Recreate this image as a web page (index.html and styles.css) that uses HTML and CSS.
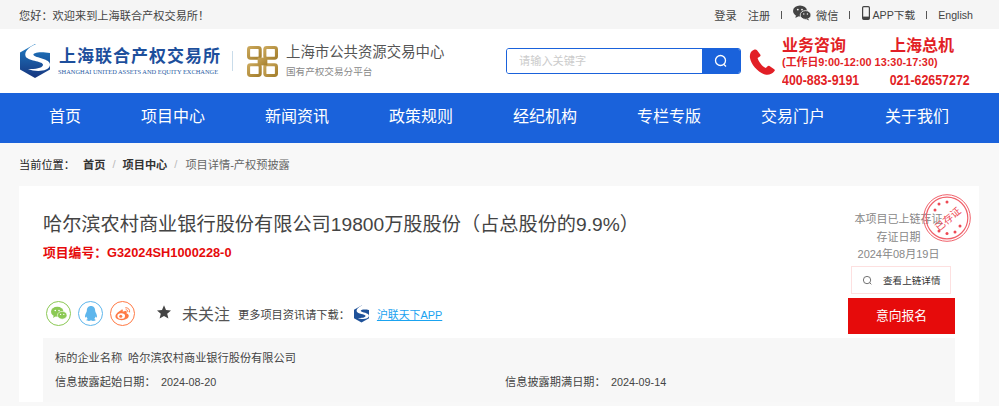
FILE: index.html
```html
<!DOCTYPE html>
<html lang="zh-CN">
<head>
<meta charset="utf-8">
<title>哈尔滨农村商业银行股份有限公司</title>
<link rel="stylesheet" href="styles.css">
</head>
<body>
<div class="topbar">
  <span class="welcome">您好：欢迎来到上海联合产权交易所！</span>
  <div class="toplinks">
    <a class="tl-login">登录</a>
    <a class="tl-reg">注册</a>
    <i class="sep"></i>
    <a class="tl-icon">
      <svg class="ic-wx" viewBox="0 0 18 16"><ellipse cx="7" cy="6" rx="7" ry="5.6" fill="#444"/><path d="M3 10l-.6 3 3-1.8z" fill="#444"/><ellipse cx="12.6" cy="10" rx="5.4" ry="4.4" fill="#444" stroke="#f5f5f5" stroke-width=".8"/><path d="M15 13.5l1.2 2-2.8-1.2z" fill="#444"/><circle cx="4.8" cy="4.6" r=".9" fill="#f5f5f5"/><circle cx="9" cy="4.6" r=".9" fill="#f5f5f5"/><circle cx="10.8" cy="9" r=".7" fill="#f5f5f5"/><circle cx="14.4" cy="9" r=".7" fill="#f5f5f5"/></svg>
      微信</a>
    <i class="sep"></i>
    <a class="tl-icon tl-app">
      <svg class="ic-ph" viewBox="0 0 8 14"><rect x=".6" y=".6" width="6.8" height="12.8" rx="1.2" fill="none" stroke="#444" stroke-width="1.2"/><rect x="1" y="10.6" width="6" height="2.6" fill="#444"/></svg>
      APP下载</a>
    <i class="sep"></i>
    <a class="tl-en">English</a>
  </div>
</div>

<header class="header">
  <div class="brand">
    <svg class="logo-s" viewBox="0 0 32 36">
      <defs><linearGradient id="g1" x1="0" y1="0" x2="0" y2="1"><stop offset="0" stop-color="#1f7cc4"/><stop offset="1" stop-color="#16357e"/></linearGradient></defs>
      <path d="M16 1L31 9.500V26.500L16 35 1 26.500V9.500z" fill="url(#g1)"/>
      <path d="M20 0C11 3 5 8 6.500 13c1.500 5 17 5 17.500 8.500.4 3-6 5-15 4.500 7 3 21 3 22-4 .8-6.500-15-7-16.500-10C13.500 10 20 8 31 10L31 8z" fill="#fff"/>
    </svg>
    <div class="brand-main">
      <div class="brand-cn">上海联合产权交易所</div>
      <div class="brand-en">SHANGHAI UNITED ASSETS AND EQUITY EXCHANGE</div>
    </div>
    <i class="brand-div"></i>
    <svg class="logo-g" viewBox="0 0 32 32">
      <defs><linearGradient id="g2" x1="0" y1="0" x2="1" y2="1"><stop offset="0" stop-color="#c9a659"/><stop offset="1" stop-color="#a5802f"/></linearGradient></defs>
      <g fill="none" stroke="url(#g2)" stroke-width="3.200">
        <rect x="1.600" y="1.600" width="12" height="11" rx="2"/>
        <rect x="18.400" y="1.600" width="12" height="11" rx="2"/>
        <rect x="1.600" y="19.400" width="12" height="11" rx="2"/>
        <rect x="18.400" y="19.400" width="12" height="11" rx="2"/>
      </g>
      <path d="M11 12h10v8H11z" fill="url(#g2)"/>
    </svg>
    <div class="brand-sub">
      <div class="sub-a">上海市公共资源交易中心</div>
      <div class="sub-b">国有产权交易分平台</div>
    </div>
  </div>
  <form class="search">
    <input class="search-input" placeholder="请输入关键字">
    <span class="search-btn">
      <svg viewBox="0 0 14 14" class="ic-search"><circle cx="6.500" cy="6.500" r="5" fill="none" stroke="#fff" stroke-width="1.300"/><path d="M10 10.500l2 2" stroke="#fff" stroke-width="1.300"/></svg>
    </span>
  </form>
  <svg class="ic-tel" viewBox="0 0 26 26"><path d="M5 .8C2 2 .4 4.500 1 9c1 6.500 8 14.500 15 16.500 3.500 1 7-.3 9.500-3.500.5-.8.400-1.300-.3-1.800l-4.700-3.200c-.8-.5-1.300-.3-1.900.3l-1.800 1.800c-3-1-7.500-6.500-8.200-10l2.300-1.600c.7-.5.800-1 .5-1.800L8 1.300C7.400.5 6.300.3 5 .8z" fill="#e21f26"/></svg>
  <div class="contact">
    <div class="c-row c-title"><span class="c-a">业务咨询</span><span>上海总机</span></div>
    <div class="c-hours">(工作日9:00-12:00 13:30-17:30)</div>
    <div class="c-row c-num"><span class="c-n">400-883-9191</span><span>021-62657272</span></div>
  </div>
</header>

<nav class="nav">
  <a>首页</a><a>项目中心</a><a>新闻资讯</a><a>政策规则</a><a>经纪机构</a><a>专栏专版</a><a>交易门户</a><a>关于我们</a>
</nav>

<div class="crumbs">
  <span class="cr-label">当前位置：</span>
  <b>首页</b><i>/</i><b>项目中心</b><i>/</i><span class="cr-cur">项目详情-产权预披露</span>
</div>

<main class="card">
  <div class="stamp">
    <svg viewBox="0 0 48 48" class="stamp-svg">
      <circle cx="24" cy="24" r="23.300" fill="none" stroke="#f0606a" stroke-width="1"/>
      <circle cx="24" cy="24" r="20.800" fill="none" stroke="#f0606a" stroke-width="1.200"/>
      <g fill="#ee4a55"><circle cx="12" cy="16" r="1.500"/><circle cx="16" cy="10" r="1.500"/><circle cx="24" cy="8" r="1.500"/><circle cx="37" cy="32" r="1.500"/><circle cx="32" cy="38" r="1.500"/><circle cx="24" cy="39.500" r="1.500"/><circle cx="16" cy="37" r="1.500"/></g>
    </svg>
    <span class="stamp-text">已存证</span>
  </div>
  <div class="top">
    <div class="main-col">
      <h1 class="title">哈尔滨农村商业银行股份有限公司19800万股股份（占总股份的9.9%）</h1>
      <div class="code">项目编号：G32024SH1000228-0</div>
      <div class="social">
        <span class="soc soc-wx"><svg viewBox="0 0 18 16"><ellipse cx="7" cy="6" rx="7" ry="5.600" fill="#8cc955"/><path d="M3 10l-.6 3 3-1.800z" fill="#8cc955"/><ellipse cx="12.600" cy="10" rx="5.400" ry="4.400" fill="#8cc955" stroke="#fff" stroke-width=".7"/><circle cx="4.800" cy="4.600" r=".9" fill="#fff"/><circle cx="9" cy="4.600" r=".9" fill="#fff"/><circle cx="10.800" cy="9" r=".7" fill="#fff"/><circle cx="14.400" cy="9" r=".7" fill="#fff"/></svg></span>
        <span class="soc soc-qq"><svg viewBox="0 0 16 18"><path d="M8 0C4.500 0 3 2.700 3 5.500c0 1-.2 1.500-1 3C1 10.500.5 12.500 1 13.500c.4.600 1.200-.3 1.600-1 .2 1.200.7 2.200 1.600 3-1 .3-1.700.8-1.700 1.400C2.500 17.600 4 18 5.500 18c1 0 2-.3 2.500-.8.500.5 1.500.8 2.500.8 1.500 0 3-.4 3-1.100 0-.6-.7-1.100-1.700-1.400.9-.8 1.400-1.800 1.600-3 .4.700 1.200 1.600 1.600 1 .5-1 0-3-1-5-.8-1.500-1-2-1-3C13 2.700 11.500 0 8 0z" fill="#5eb6ec"/></svg></span>
        <span class="soc soc-wb"><svg viewBox="0 0 18 16"><path d="M7.500 4C4 5.500.5 8.500.5 11.200.5 14 4 15.500 7.500 15.500c4.500 0 8-2.500 8-5 0-1.500-1.300-2.300-2.500-2.600.5-1.300.3-2.300-.6-2.700-1-.3-2.500.1-3.800.7.400-1.200.3-2-.2-2.300-.5-.2-1.300.1-1.900.4z" fill="#ff7a45"/><ellipse cx="7" cy="10.800" rx="4.300" ry="3.200" fill="#fff"/><circle cx="6.500" cy="11" r="1.700" fill="#ff7a45"/><path d="M12 1.500c2.500-.4 5 1.800 4.500 4.800M12.500 3.800c1.300-.2 2.300 1 2 2.200" fill="none" stroke="#ff7a45" stroke-width="1.100" stroke-linecap="round"/></svg></span>
        <svg class="ic-star" viewBox="0 0 14 14"><path d="M7 .3l2 4.600 5 .5-3.800 3.300 1.200 4.900L7 11l-4.400 2.600 1.200-4.900L0 5.400l5-.5z" fill="#444"/></svg>
        <span class="follow">未关注</span>
        <span class="more">更多项目资讯请下载：</span>
        <svg class="logo-app" viewBox="0 0 32 36"><path d="M16 1L31 9.500V26.500L16 35 1 26.500V9.500z" fill="#1f5299"/><path d="M20 0C11 3 5 8 6.500 13c1.500 5 17 5 17.500 8.500.4 3-6 5-15 4.500 7 3 21 3 22-4 .8-6.500-15-7-16.500-10C13.500 10 20 8 31 10L31 8z" fill="#fff"/></svg>
        <a class="app-link">沪联天下APP</a>
      </div>
    </div>
    <aside class="side">
      <p class="side-a">本项目已上链存证</p>
      <p class="side-b">存证日期</p>
      <p class="side-c">2024年08月19日</p>
      <a class="chain-btn"><svg viewBox="0 0 12 12" class="ic-q"><circle cx="5.500" cy="5.500" r="4" fill="none" stroke="#666" stroke-width="1"/><path d="M8.500 8.500l1.700 1.700" stroke="#666"/></svg><span>查看上链详情</span></a>
      <a class="apply-btn">意向报名</a>
    </aside>
  </div>
  <section class="info">
    <div class="info-row"><span class="i-label">标的企业名称</span><span>哈尔滨农村商业银行股份有限公司</span></div>
    <div class="info-row info-dates">
      <div class="info-cell"><span class="d-label">信息披露起始日期：</span><span class="d-val">2024-08-20</span></div>
      <div class="info-cell"><span class="d-label">信息披露期满日期：</span><span class="d-val">2024-09-14</span></div>
    </div>
  </section>
</main>
</body>
</html>
```
FILE: styles.css
```css
* { box-sizing: border-box; }
html, body { margin: 0; padding: 0; }
body {
  background: #f8f8f8;
  color: #333;
  font-family: "Liberation Sans", "Noto Sans CJK SC", sans-serif;
  font-size: 11.200px;
  width: 999px;
  height: 406px;
  overflow: hidden;
}
a { color: inherit; text-decoration: none; }
p, h1 { margin: 0; font-weight: normal; }
i { font-style: normal; }

.topbar {
  height: 29px;
  background: #f5f5f5;
  display: flex;
  align-items: center;
  justify-content: space-between;
  padding: 0 26px 0 19px;
  color: #444;
}
.toplinks { display: flex; align-items: center; }
.tl-reg { margin-left: 11px; }
.sep { width: 1px; height: 8px; background: #555; margin: 0 11px; }
.tl-icon { display: flex; align-items: center; gap: 5px; }
.tl-app { font-size: 10.700px; }
.ic-wx { width: 18px; height: 16px; margin-top: -4px; }
.ic-ph { width: 8px; height: 14px; margin-top: -4px; margin-right: -3px; margin-left: 1px; }
.tl-en { font-size: 10.600px; }

.header {
  height: 64px;
  background: #fff;
  display: flex;
  align-items: center;
  padding-left: 19px;
}
.brand { display: flex; flex: none; align-items: center; width: 487px; }
.logo-s { width: 32px; height: 36px; }
.brand-main { margin-left: 7px; width: 161px; }
.brand-cn { font-size: 17px; font-weight: 700; color: #1d4f9c; letter-spacing: 1px; line-height: 20px; white-space: nowrap; margin-left: 1px; }
.brand-en { font-family: "Liberation Serif", serif; font-size: 6.400px; color: #2a5ba3; white-space: nowrap; line-height: 9px; margin-top: 0; }
.brand-div { width: 1px; height: 20px; background: #c9dcea; margin: 0 14px 0 13px; }
.logo-g { width: 31px; height: 31px; }
.brand-sub { margin-left: 8px; margin-top: -1px; }
.sub-a { font-size: 14.400px; color: #555; line-height: 20px; white-space: nowrap; }
.sub-b { font-size: 9.600px; color: #888; line-height: 14px; margin-top: 3px; white-space: nowrap; }

.search {
  flex: none;
  width: 235px;
  height: 26px;
  border: 1px solid #1a62db;
  border-radius: 3px;
  display: flex;
  overflow: hidden;
  margin: 0;
}
.search-input {
  flex: 1;
  min-width: 0;
  border: 0;
  outline: 0;
  background: #fff;
  padding: 0 0 0 12px;
  font: 11.200px "Liberation Sans", "Noto Sans CJK SC", sans-serif;
}
.search-input::placeholder { color: #ccc; }
.search-btn { width: 38px; background: #1a62db; display: flex; align-items: center; justify-content: center; }
.ic-search { width: 14px; height: 14px; }
.ic-tel { flex: none; width: 26px; height: 26px; margin: 2px 7px 0 8px; }
.contact { flex: none; width: 205px; color: #e21f26; font-weight: 700; white-space: nowrap; margin-top: 3px; }
.c-row { display: flex; }
.c-a { width: 108px; }
.c-title { font-size: 16px; line-height: 19px; }
.c-hours { font-size: 10.900px; line-height: 15px; }
.c-num { font-size: 14.500px; line-height: 20px; transform: scaleX(.855); transform-origin: left center; }
.c-n { flex: none; width: 126px; }

.nav {
  height: 50px;
  background: #1a62db;
  display: flex;
  padding-left: 19px;
}
.nav a { padding: 0 30px; text-align: center; color: #fff; font-size: 16px; line-height: 47px; }

.crumbs {
  height: 43px;
  display: flex;
  align-items: center;
  padding: 0 0 2px 19px;
  color: #333;
}
.cr-label { width: 64px; color: #222; }
.crumbs b { color: #333; }
.crumbs i { color: #bbb; margin: 0 7px; }
.cr-cur { color: #666; margin-left: 1px; }

.card {
  position: relative;
  margin: 0 20px 0 19px;
  background: #fff;
  padding: 24px 24px 0;
}
.stamp { position: absolute; left: 904px; top: 8px; width: 48px; height: 48px; }
.stamp-svg { width: 48px; height: 48px; display: block; }
.stamp-text {
  position: absolute;
  left: 0; top: 0; right: 0; bottom: 0;
  display: flex; align-items: center; justify-content: center;
  color: #ee4a55;
  font-size: 10px;
  transform: rotate(-40deg);
}
.top { display: flex; height: 128px; justify-content: space-between; }
.main-col { width: 790px; }
.title { font-size: 19.200px; line-height: 26px; color: #444; white-space: nowrap; margin-top: 2px; }
.code { color: #e60b0b; font-size: 12.800px; font-weight: 700; line-height: 16px; margin-top: 7px; }
.social { display: flex; align-items: center; margin-top: 40px; padding-left: 3px; height: 25px; }
.soc { width: 25px; height: 25px; border-radius: 50%; border: 1px solid; display: flex; align-items: center; justify-content: center; margin-right: 7px; }
.soc svg { width: 16px; height: 15px; }
.soc-wx { border-color: #8cc955; }
.soc-qq { border-color: #5eb6ec; }
.soc-wb { border-color: #ff7a45; }
.ic-star { width: 14px; height: 14px; margin-left: 15px; margin-top: -3px; }
.follow { font-size: 16px; color: #555; margin-left: 11px; margin-top: -2px; }
.more { margin-left: 8px; color: #444; }
.logo-app { width: 17px; height: 18px; margin-left: 3px; }
.app-link { color: #1aa3f0; text-decoration: underline; margin-left: 7px; font-size: 10.900px; }

.side { width: 107px; text-align: center; color: #888; margin-top: 1px; font-size: 11px; }
.side-a, .side-b, .side-c { padding-right: 6px; white-space: nowrap; }
.side-a { line-height: 17px; }
.side-b { line-height: 18px; }
.side-c { line-height: 17px; }
.chain-btn {
  display: flex; align-items: center;
  width: 100px; height: 28px;
  margin: 3px 0 4px 3px;
  border: 1px solid #fde0e0;
  padding-left: 10px;
  color: #333;
  font-size: 9.600px;
}
.ic-q { width: 11px; height: 11px; margin-right: 10px; }
.apply-btn {
  display: block;
  height: 36px;
  background: #e60b0b;
  color: #fff;
  font-size: 12.800px;
  line-height: 36px;
  text-align: center;
}
.info {
  background: #f7f7f7;
  height: 64px;
  padding: 10px 12px 0;
  color: #444;
}
.info-row { display: flex; line-height: 20px; }
.i-label { width: 73px; }
.info-dates { margin-top: 4px; }
.info-cell { flex: none; width: 450px; display: flex; }
.d-label { width: 106px; }
.d-val { font-size: 10.800px; }
```
